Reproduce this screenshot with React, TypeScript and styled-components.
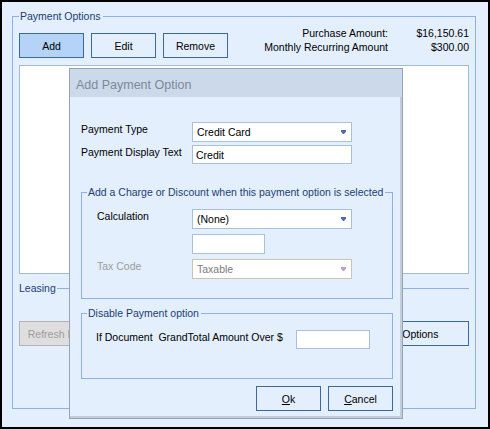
import styled, { createGlobalStyle } from 'styled-components';

const GlobalStyle = createGlobalStyle`
  html, body {
    margin: 0;
    padding: 0;
  }
  body {
    font-family: "Liberation Sans", Arial, sans-serif;
    font-size: 10.5px;
    color: #000;
  }
  * {
    box-sizing: border-box;
  }
`;

const Frame = styled.div`
  position: relative;
  width: 490px;
  height: 429px;
  border: 2px solid #000;
  background: #e3effd;
  padding: 7px 0 0 10px;
`;

const GroupBox = styled.fieldset<{ $pad?: string }>`
  margin: 0;
  min-width: 0;
  border: 1px solid #8db2e2;
  padding: ${({ $pad }) => $pad ?? '0'};
`;

const OuterGroup = styled(GroupBox)`
  width: 464px;
  height: 400px;
`;

const Legend = styled.legend`
  padding: 0 2px 0 1px;
  margin: 0;
  line-height: 14px;
  color: #1c3d74;
`;

const TopRow = styled.div`
  display: flex;
  justify-content: space-between;
  align-items: flex-start;
`;

const ButtonStrip = styled.div`
  display: flex;
  gap: 7px;
  margin-top: 7px;
`;

const PushButton = styled.button<{ $active?: boolean; $width?: number }>`
  width: ${({ $width }) => $width ?? 65}px;
  height: 25px;
  padding: 0;
  border: 1px solid #3a6a9b;
  border-radius: 0;
  background: ${({ $active }) => ($active ? '#b4d3f7' : '#e3effd')};
  font: inherit;
  color: #000;
  white-space: nowrap;
  overflow: hidden;

  &:disabled {
    border-color: #b3b3b3;
    background: #dedede;
    color: #9d9d9d;
  }
`;

const Amounts = styled.div`
  display: grid;
  grid-template-columns: auto 70px;
  column-gap: 11px;
  line-height: 14px;
  text-align: right;
`;

const ListBox = styled.div`
  margin-top: 7px;
  height: 209px;
  border: 1px solid #a3bad6;
  background: #fff;
`;

const SectionRule = styled.div`
  display: flex;
  align-items: center;
  gap: 1px;
  margin-top: 7px;
  line-height: 14px;
  color: #1c3d74;

  &::after {
    content: '';
    flex: 1;
    height: 1px;
    background: #8db2e2;
  }
`;

const BottomButtons = styled.div`
  display: flex;
  justify-content: space-between;
  margin-top: 26px;
`;

/* dialog */

const Dialog = styled.div`
  position: absolute;
  left: 67px;
  top: 66px;
  width: 334px;
  height: 351px;
  border: 1px solid #95a3b6;
  display: flex;
  flex-direction: column;
`;

const TitleBar = styled.div`
  height: 28px;
  padding: 3px 0 0 6px;
  display: flex;
  align-items: center;
  background: #cbd9ea;
  color: #7d8999;
  font-size: 12.5px;
`;

const DialogBody = styled.div`
  flex: 1;
  display: flex;
  flex-direction: column;
  padding: 25px 7px 0 11px;
  background: #e3effd;
  border-right: 2px solid #c3cdd9;
  border-bottom: 2px solid #c3cdd9;
`;

const FormGrid = styled.div<{ $label: number; $gap?: number }>`
  display: grid;
  grid-template-columns: ${({ $label }) => $label}px 160px;
  row-gap: ${({ $gap }) => $gap ?? 3}px;
  align-items: start;
`;

const FieldLabel = styled.span<{ $disabled?: boolean }>`
  line-height: 14px;
  white-space: pre;
  color: ${({ $disabled }) => ($disabled ? '#9c9c9c' : '#000')};
`;

const TextBox = styled.div<{ $width?: number; $height?: number }>`
  width: ${({ $width }) => ($width ? `${$width}px` : '100%')};
  height: ${({ $height }) => $height ?? 19}px;
  border: 1px solid #a9c0db;
  background: #fff;
  padding: 0 3px;
  display: flex;
  align-items: center;
`;

const ComboBox = styled.div<{ $disabled?: boolean }>`
  height: 20px;
  border: 1px solid ${({ $disabled }) => ($disabled ? '#c9c4b4' : '#a9c0db')};
  background: #fff;
  padding: 0 5px 0 4px;
  display: flex;
  align-items: center;
  justify-content: space-between;
  color: ${({ $disabled }) => ($disabled ? '#7c7c7c' : '#000')};
`;

const Inner = styled.div<{ $left: number }>`
  padding: 10px 0 0 ${({ $left }) => $left}px;
`;

const InlineRow = styled.div`
  display: flex;
  align-items: flex-start;
`;

const DialogButtons = styled.div`
  display: flex;
  justify-content: flex-end;
  gap: 7px;
  margin-top: 7px;
`;

const Arrow = ({ color }: { color: string }) => (
  <svg width="5" height="4" viewBox="0 0 5 4">
    <path d="M0 0h5v1.5L3 4H2L0 1.5z" fill={color} />
  </svg>
);

const Combo = ({ value, disabled }: { value: string; disabled?: boolean }) => (
  <ComboBox $disabled={disabled}>
    <span>{value}</span>
    <Arrow color={disabled ? '#bda3bf' : '#4a6ea9'} />
  </ComboBox>
);

export default function App() {
  return (
    <>
      <GlobalStyle />
      <Frame>
        <OuterGroup $pad="3px 6px 0 6px">
          <Legend>Payment Options</Legend>
          <TopRow>
            <ButtonStrip>
              <PushButton $active>Add</PushButton>
              <PushButton>Edit</PushButton>
              <PushButton>Remove</PushButton>
            </ButtonStrip>
            <Amounts>
              <span>Purchase Amount:</span>
              <span>$16,150.61</span>
              <span>Monthly Recurring Amount</span>
              <span>$300.00</span>
            </Amounts>
          </TopRow>
          <ListBox />
          <SectionRule>Leasing</SectionRule>
          <BottomButtons>
            <PushButton $width={94} disabled>
              Refresh Leasing
            </PushButton>
            <PushButton $width={137}>Leasing Options</PushButton>
          </BottomButtons>
        </OuterGroup>

        <Dialog>
          <TitleBar>Add Payment Option</TitleBar>
          <DialogBody>
            <FormGrid $label={111}>
              <FieldLabel>Payment Type</FieldLabel>
              <Combo value="Credit Card" />
              <FieldLabel>Payment Display Text</FieldLabel>
              <TextBox>Credit</TextBox>
            </FormGrid>

            <GroupBox $pad="0 0 19px 5px" style={{ marginTop: 21 }}>
              <Legend>Add a Charge or Discount when this payment option is selected</Legend>
              <Inner $left={10}>
                <FormGrid $label={95} $gap={5}>
                  <FieldLabel>Calculation</FieldLabel>
                  <Combo value="(None)" />
                  <span />
                  <TextBox $width={73} $height={20} />
                  <FieldLabel $disabled>Tax Code</FieldLabel>
                  <Combo value="Taxable" disabled />
                </FormGrid>
              </Inner>
            </GroupBox>

            <GroupBox $pad="0 0 29px 5px" style={{ marginTop: 7 }}>
              <Legend>Disable Payment option</Legend>
              <Inner $left={9}>
                <InlineRow>
                  <FieldLabel style={{ width: 200 }}>If Document  GrandTotal Amount Over $</FieldLabel>
                  <TextBox $width={74} />
                </InlineRow>
              </Inner>
            </GroupBox>

            <DialogButtons>
              <PushButton>
                <u>O</u>k
              </PushButton>
              <PushButton>
                <u>C</u>ancel
              </PushButton>
            </DialogButtons>
          </DialogBody>
        </Dialog>
      </Frame>
    </>
  );
}
